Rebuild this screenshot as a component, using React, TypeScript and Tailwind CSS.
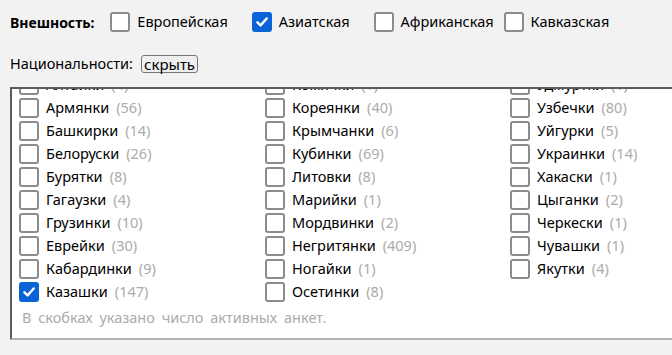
import React from 'react';

type Item = { name: string; count: number; checked?: boolean };

const col1: Item[] = [
  { name: 'Алтайки', count: 4 },
  { name: 'Армянки', count: 56 },
  { name: 'Башкирки', count: 14 },
  { name: 'Белоруски', count: 26 },
  { name: 'Бурятки', count: 8 },
  { name: 'Гагаузки', count: 4 },
  { name: 'Грузинки', count: 10 },
  { name: 'Еврейки', count: 30 },
  { name: 'Кабардинки', count: 9 },
  { name: 'Казашки', count: 147, checked: true },
];

const col2: Item[] = [
  { name: 'Комячки', count: 1 },
  { name: 'Кореянки', count: 40 },
  { name: 'Крымчанки', count: 6 },
  { name: 'Кубинки', count: 69 },
  { name: 'Литовки', count: 8 },
  { name: 'Марийки', count: 1 },
  { name: 'Мордвинки', count: 2 },
  { name: 'Негритянки', count: 409 },
  { name: 'Ногайки', count: 1 },
  { name: 'Осетинки', count: 8 },
];

const col3: Item[] = [
  { name: 'Удмуртки', count: 1 },
  { name: 'Узбечки', count: 80 },
  { name: 'Уйгурки', count: 5 },
  { name: 'Украинки', count: 14 },
  { name: 'Хакаски', count: 1 },
  { name: 'Цыганки', count: 2 },
  { name: 'Черкески', count: 1 },
  { name: 'Чувашки', count: 1 },
  { name: 'Якутки', count: 4 },
];

function Box({ checked }: { checked?: boolean }) {
  if (checked) {
    return (
      <span className="w-[20px] h-[20px] shrink-0 rounded-[3px] bg-[#0b63d8] flex items-center justify-center">
        <svg width="14" height="14" viewBox="0 0 14 14" fill="none">
          <path d="M2.4 7.3 L5.6 10.4 L11.7 3.5" stroke="white" strokeWidth="2.4" strokeLinecap="round" strokeLinejoin="round" />
        </svg>
      </span>
    );
  }
  return <span className="w-[20px] h-[20px] shrink-0 rounded-[3px] border-2 border-[#8c8c8c] bg-white" />;
}

function Row({ item }: { item: Item }) {
  return (
    <div className="h-[23px] flex items-center gap-[7px]">
      <Box checked={item.checked} />
      <span className="whitespace-nowrap">
        {item.name}
        <span className="ml-[7px] text-[#ababab]">({item.count})</span>
      </span>
    </div>
  );
}

export default function App() {
  return (
    <div
      className="w-[672px] h-[355px] overflow-hidden bg-[#f2f2f2] text-[14.5px] text-black"
      style={{ fontFamily: '"Noto Sans", "DejaVu Sans", sans-serif' }}
    >
      <div className="flex items-center h-[20px] mt-[12px] pl-[10px]">
        <span className="font-bold text-[14px] mr-[16px]">Внешность:</span>
        <div className="flex items-center gap-[7px] mr-[24px]">
          <Box />
          <span>Европейская</span>
        </div>
        <div className="flex items-center gap-[7px] mr-[24px]">
          <Box checked />
          <span>Азиатская</span>
        </div>
        <div className="flex items-center gap-[7px] mr-[10px]">
          <Box />
          <span>Африканская</span>
        </div>
        <div className="flex items-center gap-[7px]">
          <Box />
          <span>Кавказская</span>
        </div>
      </div>

      <div className="flex items-center h-[18px] mt-[23px] pl-[10px] gap-[8px]">
        <span>Национальности:</span>
        <button className="h-[18px] px-[2px] border border-[#767676] rounded-[3px] bg-[#efefef] text-[15px] leading-none flex items-center">
          скрыть
        </button>
      </div>

      <div className="mt-[14px] ml-[10px] w-[760px] h-[253px] overflow-hidden bg-white border-t-2 border-l-2 border-[#5c5c5c] border-b-2 border-b-[#b3b3b3]">
        <div className="-mt-[16px] pl-[7px] grid grid-cols-[246px_245px_246px]">
          <div>
            {col1.map((it) => (
              <Row key={it.name} item={it} />
            ))}
          </div>
          <div>
            {col2.map((it) => (
              <Row key={it.name} item={it} />
            ))}
          </div>
          <div>
            {col3.map((it) => (
              <Row key={it.name} item={it} />
            ))}
          </div>
        </div>
        <div className="pl-[10px] mt-[3px] leading-[23px] text-[#ababab] [word-spacing:3px]">
          В скобках указано число активных анкет.
        </div>
      </div>
    </div>
  );
}
